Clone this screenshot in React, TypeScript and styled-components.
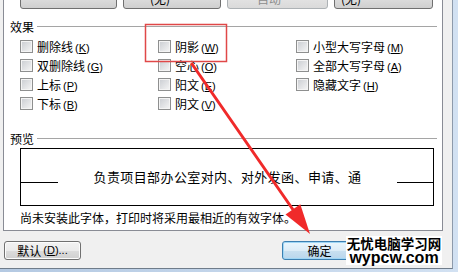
import React from 'react'
import styled, { createGlobalStyle } from 'styled-components'

const GlobalStyle = createGlobalStyle`
  html, body { margin: 0; padding: 0; }
  body {
    background: #c3d6ec;
    font-family: "Noto Sans CJK SC", "Liberation Sans", sans-serif;
    color: #000;
  }
`

const Frame = styled.div`
  position: relative;
  width: 458px;
  height: 272px;
  overflow: hidden;
  background: linear-gradient(90deg, #b4c9e2, #d2e1f2);
`

const Dialog = styled.div`
  width: 453px;
  height: 269px;
  box-sizing: border-box;
  background: #f0f0f0;
  border-right: 1px solid #8d9aab;
  border-bottom: 1px solid #6f7c8a;
  display: flex;
  flex-direction: column;
`

const Panel = styled.div`
  margin-left: 3px;
  width: 440px;
  height: 231px;
  box-sizing: border-box;
  border: 1px solid #898c95;
  border-top: none;
  background: #fff;
  display: flex;
  flex-direction: column;
`

const ComboRow = styled.div`
  display: flex;
  gap: 6px;
  margin-top: -12px;
  padding-left: 16px;
`

const Combo = styled.div<{ $w: number; $indent: number; $disabled?: boolean }>`
  width: ${p => p.$w}px;
  height: 21px;
  box-sizing: border-box;
  border: 1px solid ${p => (p.$disabled ? '#adb2b5' : '#707070')};
  border-radius: 3px;
  background: ${p =>
    p.$disabled
      ? 'linear-gradient(#f4f4f4, #eeeeee 50%, #e3e3e3 50%, #dadada)'
      : 'linear-gradient(#f2f2f2, #ebebeb 50%, #dddddd 50%, #cfcfcf)'};
  display: flex;
  align-items: center;
  padding-left: ${p => p.$indent}px;
  padding-right: 6px;
  font-size: 12px;
  line-height: 19px;
  color: ${p => (p.$disabled ? '#8d8d8d' : '#000')};
`

const ComboText = styled.span`
  flex: 1;
  white-space: nowrap;
`

const ComboArrow = styled.span<{ $disabled?: boolean }>`
  width: 0;
  height: 0;
  border-left: 3px solid transparent;
  border-right: 3px solid transparent;
  border-top: 3px solid ${p => (p.$disabled ? '#9a9a9a' : '#000')};
`

const Heading = styled.div<{ $top: number }>`
  display: flex;
  align-items: center;
  height: 13px;
  margin-top: ${p => p.$top}px;
  padding-left: 6px;
  padding-right: 5px;
`

const HeadingTitle = styled.span`
  font-size: 12px;
  line-height: 13px;
  white-space: nowrap;
`

const HeadingRule = styled.span`
  flex: 1;
  height: 1px;
  margin-left: 3px;
  background: #a5a5a5;
`

const EffectGrid = styled.div`
  display: grid;
  grid-auto-flow: column;
  grid-template-rows: repeat(4, 19px);
  grid-template-columns: 138px 138px 1fr;
  margin-top: 7px;
  padding-left: 16px;
`

const CheckItem = styled.div`
  display: flex;
  align-items: flex-start;
`

const CheckBox = styled.span`
  width: 13px;
  height: 13px;
  box-sizing: border-box;
  border: 1px solid #8e8f8f;
  background: linear-gradient(135deg, #c9ccd1, #f6f6f6);
  box-shadow: inset 0 0 0 1px #f4f4f4;
  flex: none;
`

const CheckLabel = styled.span`
  margin-left: 4px;
  font-size: 12px;
  line-height: 13px;
  white-space: nowrap;
`

const Key = styled.span`
  margin-left: 2px;
  font-family: "Liberation Sans", sans-serif;
  font-size: 11px;
`

const PreviewBox = styled.div`
  margin: 3px 0 0 16px;
  width: 414px;
  height: 58px;
  box-sizing: border-box;
  border: 1px solid #000;
  padding-bottom: 2px;
  display: flex;
  align-items: center;
`

const SampleLine = styled.span<{ $w: number }>`
  width: ${p => p.$w}px;
  height: 13px;
  box-sizing: border-box;
  border-bottom: 1px solid #000;
  flex: none;
`

const SampleText = styled.span`
  flex: 1;
  text-align: center;
  font-size: 13px;
  letter-spacing: 0.4px;
  line-height: 13px;
  white-space: nowrap;
`

const Note = styled.div`
  margin-top: 5px;
  padding-left: 16px;
  font-size: 12px;
  line-height: 13px;
  white-space: nowrap;
`

const ButtonRow = styled.div`
  display: flex;
  align-items: flex-start;
  justify-content: space-between;
  padding: 10px 95px 0 4px;
`

const Button = styled.div<{ $w: number; $default?: boolean }>`
  width: ${p => p.$w}px;
  height: 19px;
  box-sizing: border-box;
  border: 1px solid ${p => (p.$default ? '#3c7fb1' : '#707070')};
  border-radius: 3px;
  background: ${p =>
    p.$default
      ? 'linear-gradient(#eaf6fd, #dcecf7 50%, #c9e0f0 50%, #b9d6ec)'
      : 'linear-gradient(#f2f2f2, #ebebeb 50%, #dddddd 50%, #cfcfcf)'};
  box-shadow: ${p => (p.$default ? 'inset 0 0 0 1px #9fd6f5' : 'inset 0 0 0 1px #fcfcfc')};
  display: flex;
  align-items: center;
  justify-content: center;
  font-size: 12px;
  line-height: 17px;
  white-space: nowrap;
`

const Watermark = styled.div`
  position: absolute;
  right: 16px;
  bottom: 7px;
  width: 96px;
  background: #fff;
  display: flex;
  flex-direction: column;
  align-items: center;
  color: #000;
`

const MarkTitle = styled.span`
  font-size: 13.5px;
  font-weight: 700;
  line-height: 15px;
  white-space: nowrap;
`

const MarkSite = styled.span`
  font-family: "Liberation Sans", sans-serif;
  font-size: 16px;
  font-weight: 700;
  line-height: 14px;
  white-space: nowrap;
`

const Annotation = styled.svg`
  position: absolute;
  left: 0;
  top: 0;
  pointer-events: none;
`

const effects = [
  ['删除线', 'K'],
  ['双删除线', 'G'],
  ['上标', 'P'],
  ['下标', 'B'],
  ['阴影', 'W'],
  ['空心', 'O'],
  ['阳文', 'E'],
  ['阴文', 'V'],
  ['小型大写字母', 'M'],
  ['全部大写字母', 'A'],
  ['隐藏文字', 'H'],
]

export default function App() {
  return (
    <Frame>
      <GlobalStyle />
      <Dialog>
        <Panel>
          <ComboRow>
            <Combo $w={97} $indent={6}>
              <ComboText></ComboText>
              <ComboArrow />
            </Combo>
            <Combo $w={98} $indent={26}>
              <ComboText>(无)</ComboText>
              <ComboArrow />
            </Combo>
            <Combo $w={101} $indent={29} $disabled>
              <ComboText>自动</ComboText>
              <ComboArrow $disabled />
            </Combo>
            <Combo $w={99} $indent={6}>
              <ComboText>(无)</ComboText>
              <ComboArrow />
            </Combo>
          </ComboRow>

          <Heading $top={11}>
            <HeadingTitle>效果</HeadingTitle>
            <HeadingRule />
          </Heading>
          <EffectGrid>
            {effects.map(([label, key]) => (
              <CheckItem key={key}>
                <CheckBox />
                <CheckLabel>
                  {label}
                  <Key>(<u>{key}</u>)</Key>
                </CheckLabel>
              </CheckItem>
            ))}
          </EffectGrid>

          <Heading $top={16}>
            <HeadingTitle>预览</HeadingTitle>
            <HeadingRule />
          </Heading>
          <PreviewBox>
            <SampleLine $w={37} />
            <SampleText>负责项目部办公室对内、对外发函、申请、通</SampleText>
            <SampleLine $w={36} />
          </PreviewBox>
          <Note>尚未安装此字体，打印时将采用最相近的有效字体。</Note>
        </Panel>

        <ButtonRow>
          <Button $w={77}>
            默认<Key>(<u>D</u>)...</Key>
          </Button>
          <Button $w={75} $default>确定</Button>
        </ButtonRow>
      </Dialog>

      <Watermark>
        <MarkTitle>无忧电脑学习网</MarkTitle>
        <MarkSite>wypcw.com</MarkSite>
      </Watermark>

      <Annotation width="458" height="272" viewBox="0 0 458 272">
        <rect x="145.5" y="24.5" width="81" height="37" fill="none" stroke="#e04848" strokeWidth="1.5" />
        <line x1="192" y1="64" x2="296" y2="214" stroke="#f02a2a" strokeWidth="3" strokeLinecap="round" />
        <polygon points="310,234 285.5,214.5 300.3,204.3" fill="#f02a2a" />
      </Annotation>
    </Frame>
  )
}
